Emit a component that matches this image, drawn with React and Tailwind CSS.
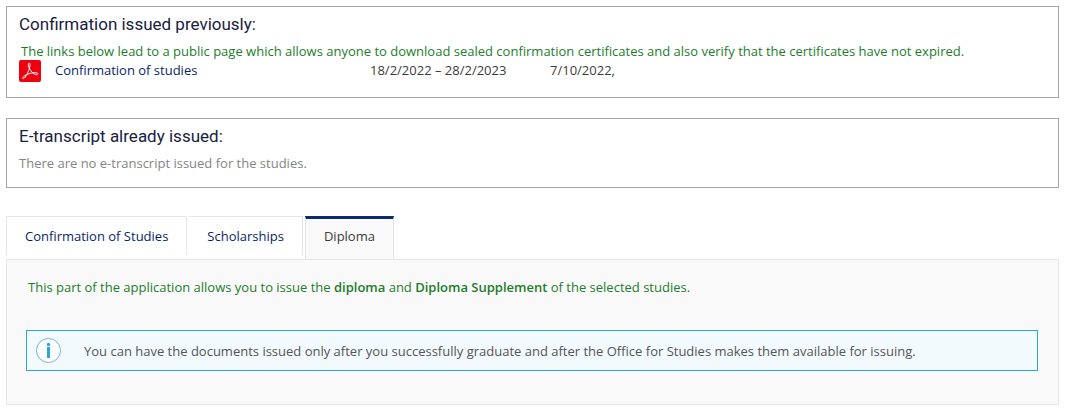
import { useState } from 'react'

const tabs = ['Confirmation of Studies', 'Scholarships', 'Diploma']

const confirmations = [
  { title: 'Confirmation of studies', period: '18/2/2022 – 28/2/2023', issued: '7/10/2022,' },
]

function PdfIcon() {
  return (
    <svg viewBox="0 0 22 22" className="block size-[22px]" aria-hidden="true">
      <rect width="22" height="22" rx="2" fill="#ed0010" />
      <path
        d="M10.2 3.2c-1 0-1.1 1.300-.8 2.600.7 3 3.300 6.600 5.700 8.100 1.500.9 3.500 1.100 3.800.2.300-1-1.500-1.500-3.600-1.400-3.600.2-7.300 1.400-10 3.300-1.300.9-2.100 2-1.500 2.500.7.600 2-.5 3.200-2.600 2-3.200 3.800-7.700 4-10.500.1-1.200 0-2.200-.8-2.200z"
        fill="none"
        stroke="#fff"
        strokeLinejoin="round"
      />
    </svg>
  )
}

function InfoIcon() {
  return (
    <svg viewBox="0 0 25 25" className="size-[25px] shrink-0" aria-hidden="true">
      <circle cx="12.5" cy="12.5" r="12" fill="#fff" stroke="#6bb5e3" />
      <circle cx="12.5" cy="6.5" r="1.7" fill="#2ea3dc" />
      <rect x="11" y="9" width="3" height="11" fill="#2ea3dc" />
    </svg>
  )
}

function IssuedPanel({ title, children }) {
  return (
    <section className="border border-[#a6a6a6] px-3 pt-[5px] pb-[15px]">
      <h2 className="mb-1.5 font-[Roboto,sans-serif] text-[17px] leading-6 text-[#18213f]">{title}</h2>
      {children}
    </section>
  )
}

export default function App() {
  const [active, setActive] = useState('Diploma')

  return (
    <main className="bg-white pt-1.5 pr-[7px] pb-1 pl-1.5 font-['Open_Sans',sans-serif] text-[13px] leading-[18px] text-[#3c3c3c]">
      <IssuedPanel title="Confirmation issued previously:">
        <p className="pl-0.5 text-[#1d7d2c]">
          The links below lead to a public page which allows anyone to download sealed confirmation
          certificates and also verify that the certificates have not expired.
        </p>
        <table className="border-collapse">
          <tbody>
            {confirmations.map((item) => (
              <tr key={item.title} className="align-top">
                <td className="w-9 p-0">
                  <PdfIcon />
                </td>
                <td className="w-[315px] p-0 pt-px">
                  <a href="#confirmation" className="text-[#0a1f6b]">
                    {item.title}
                  </a>
                </td>
                <td className="w-[180px] p-0 pt-px">{item.period}</td>
                <td className="p-0 pt-px">{item.issued}</td>
              </tr>
            ))}
          </tbody>
        </table>
      </IssuedPanel>

      <div className="mt-5">
        <IssuedPanel title="E-transcript already issued:">
          <p className="text-[#858585]">There are no e-transcript issued for the studies.</p>
        </IssuedPanel>
      </div>

      <div role="tablist" className="mt-7 flex items-start gap-0.5">
        {tabs.map((tab) => (
          <button
            key={tab}
            type="button"
            role="tab"
            aria-selected={tab === active}
            onClick={() => setActive(tab)}
            className={
              tab === active
                ? 'h-[43px] border-x border-t-3 border-x-[#e6e6e6] border-t-[#0b2a6f] bg-[#f9f9f9] px-[18px] pb-1.5'
                : 'mb-1 h-[39px] border-t border-r border-[#e6e6e6] px-[18px] text-[#0a1f6b] first:border-l'
            }
          >
            {tab}
          </button>
        ))}
      </div>
      <section role="tabpanel" className="border border-[#e6e6e6] bg-[#f9f9f9] pt-[18px] pr-5 pb-[33px] pl-[19px]">
        <p className="pl-0.5 text-[#1d7d2c]">
          This part of the application allows you to issue the{' '}
          <strong className="font-semibold">diploma</strong> and{' '}
          <strong className="font-semibold">Diploma Supplement</strong> of the selected studies.
        </p>
        <div className="mt-[34px] flex items-center gap-[23px] border border-[#2ea3dc] bg-[#f2fafd] px-[9px] py-[7px] text-[#555]">
          <InfoIcon />
          <p>
            You can have the documents issued only after you successfully graduate and after the
            Office for Studies makes them available for issuing.
          </p>
        </div>
      </section>
    </main>
  )
}
